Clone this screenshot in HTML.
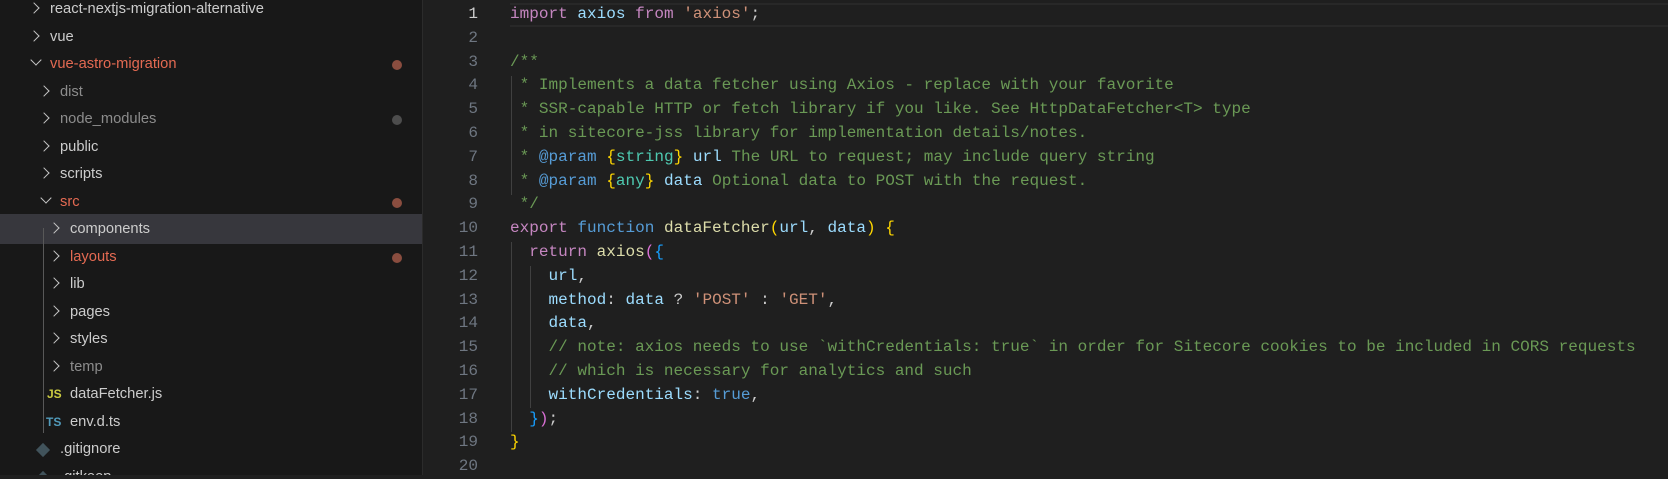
<!DOCTYPE html>
<html><head><meta charset="utf-8"><style>
*{margin:0;padding:0;box-sizing:border-box}
body{width:1668px;height:475px;overflow:hidden;background:#1f1f1f;position:relative;font-family:"Liberation Sans",sans-serif}
#side{position:absolute;left:0;top:0;width:423px;height:475px;background:#181818;border-right:1px solid #2b2b2b;overflow:hidden}
.row{position:absolute;left:0;width:423px;height:27.5px;line-height:27.5px;font-size:14.7px;color:#cccccc;white-space:nowrap}
.row .t{position:absolute}
.row .ch{position:absolute;top:8px;width:8px;height:8px;border-right:1.5px solid #c5c5c5;border-bottom:1.5px solid #c5c5c5;transform:rotate(-45deg)}
.row .ch.d{transform:rotate(45deg);top:5px}
.dot{position:absolute;left:392px;top:9px;width:10px;height:10px;border-radius:50%;background:#8a4d3f}
.dot.g{background:#4d4d4d}
.mod{color:#e46a52}.dim{color:#8c8c8c}
.sel{background:#37373d}
#ed{position:absolute;left:424px;top:0;right:0;height:475px}
.ln{position:absolute;left:0;width:54px;text-align:right;font-family:"Liberation Mono",monospace;font-size:16.05px;color:#6e7681;height:23.8px;line-height:23.8px}
.cl{position:absolute;left:86px;font-family:"Liberation Mono",monospace;font-size:16.05px;height:23.8px;line-height:23.8px;white-space:pre;color:#cccccc}
.k{color:#c586c0}.b{color:#569cd6}.v{color:#9cdcfe}.f{color:#dcdcaa}.s{color:#ce9178}.c{color:#6a9955}.y{color:#ffd700}.p{color:#da70d6}.lb{color:#179fff}.tl{color:#4ec9b0}
.ig{position:absolute;width:1px;background:#404040}
</style></head><body>
<div id="side">
<div class="row" style="top:-3.7px"><span class="ch" style="left:30px"></span><span class="t" style="left:50px">react-nextjs-migration-alternative</span></div>
<div class="row" style="top:23.8px"><span class="ch" style="left:30px"></span><span class="t" style="left:50px">vue</span></div>
<div class="row" style="top:51.3px"><span class="ch d" style="left:32px"></span><span class="t mod" style="left:50px">vue-astro-migration</span><span class="dot"></span></div>
<div class="row" style="top:78.8px"><span class="ch" style="left:40px"></span><span class="t dim" style="left:60px">dist</span></div>
<div class="row" style="top:106.3px"><span class="ch" style="left:40px"></span><span class="t dim" style="left:60px">node_modules</span><span class="dot g"></span></div>
<div class="row" style="top:133.8px"><span class="ch" style="left:40px"></span><span class="t" style="left:60px">public</span></div>
<div class="row" style="top:161.3px"><span class="ch" style="left:40px"></span><span class="t" style="left:60px">scripts</span></div>
<div class="row" style="top:188.8px"><span class="ch d" style="left:42px"></span><span class="t mod" style="left:60px">src</span><span class="dot"></span></div>
<div class="row sel" style="top:214.3px;height:29.5px;line-height:31.5px"><span class="ch" style="left:50px;top:10px"></span><span class="t" style="left:70px">components</span></div>
<div class="row" style="top:243.8px"><span class="ch" style="left:50px"></span><span class="t mod" style="left:70px">layouts</span><span class="dot"></span></div>
<div class="row" style="top:271.3px"><span class="ch" style="left:50px"></span><span class="t" style="left:70px">lib</span></div>
<div class="row" style="top:298.8px"><span class="ch" style="left:50px"></span><span class="t" style="left:70px">pages</span></div>
<div class="row" style="top:326.3px"><span class="ch" style="left:50px"></span><span class="t" style="left:70px">styles</span></div>
<div class="row" style="top:353.8px"><span class="ch" style="left:50px"></span><span class="t dim" style="left:70px">temp</span></div>
<div class="row" style="top:381.3px"><span class="t" style="left:47px;color:#cbcb41;font-weight:bold;font-size:12px">JS</span><span class="t" style="left:70px">dataFetcher.js</span></div>
<div class="row" style="top:408.8px"><span class="t" style="left:46px;color:#519aba;font-weight:bold;font-size:12px">TS</span><span class="t" style="left:70px">env.d.ts</span></div>
<div class="row" style="top:436.3px"><span class="t" style="left:38px;top:9px;width:10px;height:10px;background:#41535b;transform:rotate(45deg)"></span><span class="t" style="left:60px">.gitignore</span></div>
<div class="row" style="top:463.8px"><span class="t" style="left:38px;top:9px;width:10px;height:10px;background:#41535b;transform:rotate(45deg)"></span><span class="t" style="left:60px">.gitkeep</span></div>
<div class="ig" style="left:43px;top:228px;height:205px;background:#585858"></div>
</div>
<div id="ed">
<div style="position:absolute;left:86px;right:0;top:3px;height:24px;border-top:2px solid #282828;border-bottom:2px solid #282828"></div>
<div class="ig" style="left:87px;top:76px;height:119px"></div>
<div class="ig" style="left:87px;top:242px;height:190px"></div>
<div class="ig" style="left:106px;top:266px;height:142px"></div>
</div>
<div id="code" style="position:absolute;left:424px;top:3px">
<div class="ln" style="top:0px;color:#cccccc">1</div><div class="cl" style="top:0px"><span class="k">import</span> <span class="v">axios</span> <span class="k">from</span> <span class="s">'axios'</span>;</div>
<div class="ln" style="top:23.8px">2</div>
<div class="ln" style="top:47.6px">3</div><div class="cl c" style="top:47.6px">/**</div>
<div class="ln" style="top:71.4px">4</div><div class="cl c" style="top:71.4px"> * Implements a data fetcher using Axios - replace with your favorite</div>
<div class="ln" style="top:95.2px">5</div><div class="cl c" style="top:95.2px"> * SSR-capable HTTP or fetch library if you like. See HttpDataFetcher&lt;T&gt; type</div>
<div class="ln" style="top:119px">6</div><div class="cl c" style="top:119px"> * in sitecore-jss library for implementation details/notes.</div>
<div class="ln" style="top:142.8px">7</div><div class="cl c" style="top:142.8px"> * <span class="b">@param</span> <span class="y">{</span><span class="tl">string</span><span class="y">}</span> <span class="v">url</span> The URL to request; may include query string</div>
<div class="ln" style="top:166.6px">8</div><div class="cl c" style="top:166.6px"> * <span class="b">@param</span> <span class="y">{</span><span class="tl">any</span><span class="y">}</span> <span class="v">data</span> Optional data to POST with the request.</div>
<div class="ln" style="top:190.4px">9</div><div class="cl c" style="top:190.4px"> */</div>
<div class="ln" style="top:214.2px">10</div><div class="cl" style="top:214.2px"><span class="k">export</span> <span class="b">function</span> <span class="f">dataFetcher</span><span class="y">(</span><span class="v">url</span>, <span class="v">data</span><span class="y">)</span> <span class="y">{</span></div>
<div class="ln" style="top:238px">11</div><div class="cl" style="top:238px">  <span class="k">return</span> <span class="f">axios</span><span class="p">(</span><span class="lb">{</span></div>
<div class="ln" style="top:261.8px">12</div><div class="cl" style="top:261.8px">    <span class="v">url</span>,</div>
<div class="ln" style="top:285.6px">13</div><div class="cl" style="top:285.6px">    <span class="v">method</span>: <span class="v">data</span> ? <span class="s">'POST'</span> : <span class="s">'GET'</span>,</div>
<div class="ln" style="top:309.4px">14</div><div class="cl" style="top:309.4px">    <span class="v">data</span>,</div>
<div class="ln" style="top:333.2px">15</div><div class="cl c" style="top:333.2px">    // note: axios needs to use `withCredentials: true` in order for Sitecore cookies to be included in CORS requests</div>
<div class="ln" style="top:357px">16</div><div class="cl c" style="top:357px">    // which is necessary for analytics and such</div>
<div class="ln" style="top:380.8px">17</div><div class="cl" style="top:380.8px">    <span class="v">withCredentials</span>: <span class="b">true</span>,</div>
<div class="ln" style="top:404.6px">18</div><div class="cl" style="top:404.6px">  <span class="lb">}</span><span class="p">)</span>;</div>
<div class="ln" style="top:428.4px">19</div><div class="cl" style="top:428.4px"><span class="y">}</span></div>
<div class="ln" style="top:452.2px">20</div>
</div>
</body></html>
